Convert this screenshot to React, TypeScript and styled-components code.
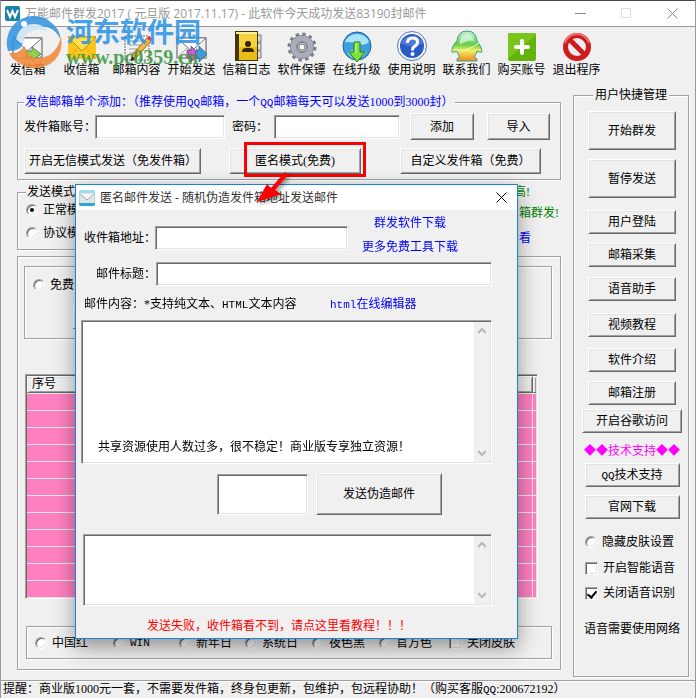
import React from "react";
import styled, { createGlobalStyle, css } from "styled-components";

const songFont = '"Liberation Serif", "Noto Sans CJK SC", serif';
const uiFont = '"Open Sans", "Noto Sans CJK SC", sans-serif';
const face = "#f0f0f0";

const GlobalStyle = createGlobalStyle`
  * { box-sizing: border-box; }
  body { margin: 0; background: ${face}; color: #000; font: 12px/16px ${songFont}; }
  button, input, textarea { font: inherit; color: inherit; margin: 0; }
`;

const sunken = css`
  border: 1px solid;
  border-color: #a0a0a0 #fff #fff #a0a0a0;
  box-shadow: inset 1px 1px 0 #696969, inset -1px -1px 0 #e3e3e3;
`;
const raised = css`
  border: 1px solid;
  border-color: #fff #696969 #696969 #fff;
  box-shadow: inset 1px 1px 0 #e3e3e3, inset -1px -1px 0 #a0a0a0;
`;
const etched = css`
  border: 1px solid #a0a0a0;
  box-shadow: 1px 1px 0 #fff, inset 1px 1px 0 #fff;
`;

const Window = styled.div`
  position: relative;
  display: flex;
  flex-direction: column;
  min-height: 100vh;
  border: 1px solid #999;
  border-top-color: #4a4549;
  overflow: hidden;
  white-space: nowrap;
`;
const TitleBar = styled.header`
  display: flex;
  align-items: center;
  height: 26px;
  padding-left: 4px;
  background: #fff;
  border-bottom: 1px solid #999;
  font-family: ${uiFont};
  color: #999;
`;
const Title = styled.h1`
  flex: 1;
  margin: 0 0 0 5px;
  font-size: 12px;
  font-weight: 400;
`;
const CaptionButton = styled.button<{ $w: number }>`
  display: flex;
  align-items: center;
  justify-content: center;
  width: ${(p) => p.$w}px;
  height: 25px;
  padding: 0;
  border: 0;
  background: none;
`;
const Toolbar = styled.nav`
  display: grid;
  grid-template-columns: 53px repeat(10, 55px);
  padding-top: 3px;
`;
const Tool = styled.button`
  display: flex;
  flex-direction: column;
  align-items: center;
  padding: 0;
  border: 0;
  background: none;
  svg { display: block; }
`;
const Watermark = styled.div`
  position: absolute;
  left: 3px;
  top: 11px;
  display: flex;
  pointer-events: none;
`;
const WatermarkText = styled.div`
  margin: 1px 0 0 2px;
`;
const WatermarkName = styled.div`
  font: 700 27px/36px "Noto Sans CJK SC", sans-serif;
  color: #2f96e6;
  opacity: 0.88;
`;
const WatermarkSite = styled.div`
  font: 700 20px/16px "Liberation Serif", serif;
  color: #38963f;
  opacity: 0.85;
`;

const Main = styled.main`
  flex: 1;
  display: grid;
  grid-template-columns: minmax(0, 1fr) 116px;
  gap: 12px;
  padding: 0 6px 0 16px;
`;
const LeftColumn = styled.div`
  display: flex;
  flex-direction: column;
  padding: 16px 0 10px;
`;
const Group = styled.fieldset<{ $pad: string; $width?: string }>`
  ${etched}
  margin: 0;
  min-width: 0;
  padding: ${(p) => p.$pad};
  width: ${(p) => p.$width ?? "auto"};
`;
const Legend = styled.legend<{ $blue?: boolean }>`
  padding: 0 2px 0 1px;
  background: ${face};
  color: ${(p) => (p.$blue ? "#00f" : "#000")};
`;
const Row = styled.div<{ $top?: number }>`
  display: flex;
  align-items: center;
  margin-top: ${(p) => p.$top ?? 0}px;
`;
const FieldLabel = styled.label<{ $w: number; $right?: boolean }>`
  flex: none;
  width: ${(p) => p.$w}px;
  text-align: ${(p) => (p.$right ? "right" : "left")};
`;
const TextBox = styled.input<{ $w: number; $h?: number }>`
  ${sunken}
  width: ${(p) => p.$w}px;
  height: ${(p) => p.$h ?? 24}px;
  padding: 0 3px;
  background: #fff;
  outline: 0;
`;
const Button = styled.button<{ $w: number; $h?: number; $left?: number; $top?: number }>`
  ${raised}
  flex: none;
  width: ${(p) => p.$w}px;
  height: ${(p) => p.$h ?? 24}px;
  margin-left: ${(p) => p.$left ?? 0}px;
  margin-top: ${(p) => p.$top ?? 0}px;
  padding: 0 4px;
  background: ${face};
`;
const Highlighted = styled.span`
  position: relative;
  display: flex;
  margin-left: 28px;
  &::after {
    content: "";
    position: absolute;
    inset: -6px -5px -3px 15px;
    border: 3px solid #fb0000;
  }
`;
const Half = styled.span`
  font: 11px/12px "Liberation Mono", monospace;
`;
const ModeArea = styled.div`
  display: flex;
  justify-content: space-between;
  margin-top: 4px;
`;
const Notes = styled.div`
  width: 47px;
  color: #008000;
`;
const Note = styled.div<{ $top?: number; $left?: number }>`
  margin-top: ${(p) => p.$top ?? 0}px;
  padding-left: ${(p) => p.$left ?? 0}px;
`;
const Link = styled.a<{ $red?: boolean; $left?: number; $top?: number }>`
  display: block;
  margin-left: ${(p) => p.$left ?? 0}px;
  margin-top: ${(p) => p.$top ?? 0}px;
  color: ${(p) => (p.$red ? "#f00" : "#00f")};
  text-decoration: none;
`;
const OptionLabel = styled.label<{ $top?: number; $w?: number }>`
  display: flex;
  align-items: center;
  gap: 5px;
  flex: none;
  width: ${(p) => (p.$w ? p.$w + "px" : "auto")};
  margin-top: ${(p) => p.$top ?? 0}px;
`;
const Radio = styled.input.attrs({ type: "radio" })`
  appearance: none;
  flex: none;
  display: grid;
  place-items: center;
  width: 12px;
  height: 12px;
  border-radius: 50%;
  border: 1px solid;
  border-color: #a0a0a0 #fff #fff #a0a0a0;
  box-shadow: inset 1px 1px 0 #696969, inset -1px -1px 0 #e3e3e3;
  background: #fff;
  &:checked::after {
    content: "";
    width: 4px;
    height: 4px;
    border-radius: 50%;
    background: #000;
  }
`;
const Check = styled.input.attrs({ type: "checkbox" })`
  ${sunken}
  appearance: none;
  flex: none;
  display: grid;
  place-items: center;
  width: 13px;
  height: 13px;
  background: #fff;
  &:checked::after {
    content: "";
    width: 4px;
    height: 7px;
    border: solid #000;
    border-width: 0 2px 2px 0;
    transform: rotate(40deg);
  }
`;
const Outer = styled.section`
  ${etched}
  flex: 1;
  margin-top: 6px;
  padding: 9px 8px 10px 6px;
`;
const FreeBox = styled.div`
  ${etched}
  height: 73px;
  padding: 10px 8px;
`;
const ListFrame = styled.div`
  ${sunken}
  margin: 35px 14px 27px 1px;
  padding: 1px;
`;
const List = styled.table`
  width: 100%;
  border-collapse: separate;
  border-spacing: 0;
  table-layout: fixed;
  th {
    ${raised}
    height: 17px;
    padding: 0 0 0 4px;
    line-height: 13px;
    text-align: left;
    font-weight: 400;
  }
  td {
    height: 17px;
    padding: 0;
    background: #ff80c0;
    border-top: 1px solid #e8e8e8;
    border-right: 1px solid #e8e8e8;
  }
  td:last-child, th:last-child { border-right: 0; padding: 0; }
`;
const SkinBox = styled.div`
  ${etched}
  display: flex;
  align-items: center;
  height: 33px;
  margin-left: 2px;
  padding-left: 8px;
`;
const SideGroup = styled.fieldset`
  ${etched}
  display: block;
  min-width: 0;
  margin: 9px 0 3px;
  padding: 0 0 0 2px;
`;
const SideLegend = styled.legend`
  margin-left: 17px;
  padding: 0 2px;
  background: ${face};
`;
const SideList = styled.div`
  display: flex;
  flex-direction: column;
  align-items: center;
  padding-top: 8px;
`;
const SideOptions = styled.div`
  width: 94px;
  margin-top: 15px;
`;
const Support = styled.div`
  margin: 9px 0 5px;
  font-family: "Noto Sans CJK SC", sans-serif;
  color: #f0f;
`;
const StatusBar = styled.footer`
  height: 18px;
  padding-left: 2px;
  border-top: 1px solid #a0a0a0;
  box-shadow: inset 0 1px 0 #fff;
  line-height: 17px;
`;

const Dialog = styled.section`
  position: absolute;
  left: 74px;
  top: 183px;
  width: 443px;
  background: ${face};
  border: 1px solid #1883d7;
  box-shadow: 0 8px 20px rgba(0, 0, 0, 0.4);
`;
const DialogTitle = styled.header`
  display: flex;
  align-items: center;
  height: 25px;
  padding-left: 3px;
  background: #fff;
  font-family: ${uiFont};
  color: #333;
`;
const DialogBody = styled.form`
  padding: 5px 25px 4px 5px;
`;
const AddressField = styled.div`
  display: flex;
  align-items: center;
  margin: 6px 0 0 3px;
`;
const Downloads = styled.div`
  width: 96px;
  margin-left: 14px;
  text-align: center;
`;
const MemoFrame = styled.div<{ $h: number; $top: number; $left?: number }>`
  ${sunken}
  display: flex;
  height: ${(p) => p.$h}px;
  margin: ${(p) => p.$top}px 0 0 ${(p) => p.$left ?? 0}px;
  padding: 1px;
  background: #fff;
`;
const MemoPane = styled.div`
  flex: 1;
  display: flex;
  flex-direction: column;
`;
const Memo = styled.textarea`
  flex: 1;
  width: 100%;
  border: 0;
  padding: 2px;
  resize: none;
  outline: 0;
  overflow: hidden;
  background: transparent;
`;
const MemoNote = styled.p`
  margin: 0 0 7px 15px;
`;
const ScrollTrack = styled.div`
  display: flex;
  flex-direction: column;
  justify-content: space-between;
  align-items: center;
  width: 16px;
  padding: 5px 0;
  background: ${face};
  svg { display: block; }
`;
const Arrow = styled.svg`
  position: absolute;
  left: 249px;
  top: 169px;
  filter: drop-shadow(2px 2px 2px rgba(0, 0, 0, 0.45));
  pointer-events: none;
`;

const Envelope = ({ children }: { children?: React.ReactNode }) => (
  <svg width="32" height="32" viewBox="0 0 32 32">
    <rect x="1" y="8" width="29" height="20" fill="#f1f1f1" stroke="#555" />
    <path d="M1 28 12 17M30 28 19 17" stroke="#aaa" fill="none" />
    <path d="M1 8 15.500 21 30 8Z" fill="#fff" stroke="#777" />
    {children}
  </svg>
);
const Chevron = ({ d, fill }: { d: string; fill: string }) => <path d={d} fill={fill} stroke="#345" strokeWidth=".6" />;

const icons: Record<string, React.ReactNode> = {
  发信箱: (
    <Envelope>
      <Chevron d="M14 21h6v-4l9 7-9 7v-4h-6Z" fill="#8bd34a" />
    </Envelope>
  ),
  收信箱: (
    <svg width="32" height="32" viewBox="0 0 32 32">
      <rect x="2" y="6" width="28" height="23" rx="1" fill="#fbc61c" />
      <path d="M2 7h28L17 20q-1 1-2 0Z" fill="#ffdf4d" stroke="#a98212" strokeWidth=".8" />
      <path d="M2 29 12 18M30 29 20 18" stroke="#e3a70d" fill="none" />
    </svg>
  ),
  邮箱内容: (
    <svg width="32" height="32" viewBox="0 0 32 32">
      <path d="M4 6h24v24H4Z" fill="#f3f3f3" stroke="#666" strokeDasharray="2 1" />
      <path d="M8 11h16M8 15h13M8 19h10M8 23h7" stroke="#999" />
      <path d="M26 8l4 3-15 17-5 3 1-6Z" fill="#f6b53c" stroke="#7d5010" strokeWidth=".8" />
      <path d="m26 8 2-2 4 3-2 2Z" fill="#d8323f" />
      <path d="m11 26-1 5 4-2Z" fill="#222" />
    </svg>
  ),
  开始发送: (
    <Envelope>
      <Chevron d="M11 20h4v-4l8 8-8 8v-4h-4Z" fill="#c75fc9" />
      <Chevron d="M20 20h3v-4l8 8-8 8v-4h-3Z" fill="#3f9bdc" />
    </Envelope>
  ),
  信箱日志: (
    <svg width="32" height="32" viewBox="0 0 32 32">
      <path d="M26 5h4v7h-4M26 13h4v7h-4M26 21h4v7h-4" fill="#ddd" stroke="#777" />
      <path d="M4 1h23v30H4Z" fill="#473500" />
      <path d="M8 4h18v26H8Z" fill="#e9bd18" />
      <path d="M5 2h21v2H5Z" fill="#fff0a0" />
      <path d="M8 4h18v13H8Z" fill="#f4d242" />
      <circle cx="17" cy="14" r="3" fill="#33260a" />
      <path d="M11 22q0-4 4-4h4q4 0 4 4Z" fill="#33260a" />
    </svg>
  ),
  软件保镖: (
    <svg width="32" height="32" viewBox="0 0 32 32">
      <circle cx="16" cy="17" r="12.500" fill="none" stroke="#7b7f8a" strokeWidth="4" strokeDasharray="3.270 3.270" />
      <circle cx="16" cy="17" r="8.500" fill="none" stroke="#6d707a" strokeWidth="7" />
      <circle cx="16" cy="17" r="8.500" fill="none" stroke="#a9adba" strokeWidth="6" />
      <circle cx="16" cy="17" r="5" fill="#c9cbd3" stroke="#666" />
      <circle cx="16" cy="17" r="3" fill="#fff" stroke="#777" />
    </svg>
  ),
  在线升级: (
    <svg width="32" height="32" viewBox="0 0 32 32">
      <circle cx="16" cy="16" r="14" fill="#3d9fdc" stroke="#1d5e9c" />
      <path d="M4 12a13 13 0 0 1 24 0q-4 4-9 2T4 12Z" fill="#a6e3fa" />
      <path d="M6 23q6-6 9-1t11-1q-4 8-12 8-5-1-8-6Z" fill="#67cbed" />
      <path d="M13 12h6v10h5l-8 10-8-10h5Z" fill="#7ee03c" stroke="#2f7f12" />
      <path d="M15 13v10" stroke="#d5ffa8" />
    </svg>
  ),
  使用说明: (
    <svg width="32" height="32" viewBox="0 0 32 32">
      <circle cx="16" cy="16" r="14.500" fill="#f4f6fb" stroke="#5b76b8" />
      <circle cx="16" cy="16" r="12" fill="#285ac4" />
      <path d="M5 13a12 12 0 0 1 22 0q-11 7-22 0Z" fill="#4c7cd8" />
      <path d="M11.500 13q0-5 5-5t5 4q0 2.500-3 4.500-2 1-2 4" fill="none" stroke="#fff" strokeWidth="3" />
      <circle cx="16.500" cy="24" r="2" fill="#fff" />
    </svg>
  ),
  联系我们: (
    <svg width="32" height="32" viewBox="0 0 32 32">
      <defs>
        <linearGradient id="penguin" x2="0" y2="1">
          <stop offset="0" stopColor="#c4eed8" />
          <stop offset=".45" stopColor="#62d049" />
          <stop offset=".65" stopColor="#f3ee63" />
          <stop offset="1" stopColor="#f58a1b" />
        </linearGradient>
      </defs>
      <path d="M16 1q9 0 10 10 5 6 5 11-1 1-5-1-1 4-3 6 4 1 3 4H6q-1-3 3-4-2-2-3-6-4 2-5 1-1-5 5-11Q7 1 16 1Z" fill="url(#penguin)" stroke="#3b9e88" />
      <path d="M9 11Q10 4 16 4t7 7q-7-2-14 4Z" fill="#e3f8ea" opacity=".7" />
      <path d="M4 20q13 2 24-7" stroke="#e8ffc4" fill="none" />
    </svg>
  ),
  购买账号: (
    <svg width="32" height="32" viewBox="0 0 32 32">
      <rect x="2" y="3" width="28" height="28" rx="2" fill="#62b30b" />
      <path d="M2 5q0-2 2-2h24q2 0 2 2L2 29Z" fill="#7ac51c" />
      <path d="M16 11v12M10 17h12" stroke="#fff" strokeWidth="4" strokeLinecap="round" />
    </svg>
  ),
  退出程序: (
    <svg width="32" height="32" viewBox="0 0 32 32">
      <circle cx="16" cy="17" r="15" fill="#f8e9e9" />
      <circle cx="16" cy="17" r="11.500" fill="#eee" stroke="#ce1c1e" strokeWidth="5" />
      <path d="m8 9 16 16" stroke="#ce1c1e" strokeWidth="5" />
      <path d="M4 13a12.500 12.500 0 0 1 24 0" stroke="#f07070" strokeWidth="2" fill="none" />
    </svg>
  ),
};

const sideButtons = [
  { label: "开始群发", w: 88, h: 39, top: 0 },
  { label: "暂停发送", w: 88, h: 39, top: 9 },
  { label: "用户登陆", w: 88, h: 24, top: 12 },
  { label: "邮箱采集", w: 88, h: 24, top: 9 },
  { label: "语音助手", w: 88, h: 24, top: 10 },
  { label: "视频教程", w: 88, h: 24, top: 12 },
  { label: "软件介绍", w: 88, h: 24, top: 11 },
  { label: "邮箱注册", w: 88, h: 24, top: 9 },
  { label: "开启谷歌访问", w: 100, h: 24, top: 4 },
];
const skins: [React.ReactNode, number][] = [
  ["中国红", 78],
  [<Half key="win">WIN</Half>, 66],
  ["新年日", 66],
  ["系统日", 67],
  ["夜色黑", 67],
  ["官方色", 70],
];

const Scrollbar = () => (
  <ScrollTrack>
    <svg width="8" height="8" viewBox="0 0 8 8"><path d="M0 6 4 2l4 4" fill="none" stroke="#b8b8b8" strokeWidth="2" /></svg>
    <svg width="8" height="8" viewBox="0 0 8 8"><path d="m0 2 4 4 4-4" fill="none" stroke="#b8b8b8" strokeWidth="2" /></svg>
  </ScrollTrack>
);

const AnonymousMailDialog = () => (
  <Dialog role="dialog" aria-labelledby="dialog-title">
    <DialogTitle>
      <svg width="16" height="16" viewBox="0 0 16 16">
        <rect width="16" height="16" rx="2" fill="#9edcf0" />
        <path d="M0 13h16v1q0 2-2 2H2q-2 0-2-2Z" fill="#28a9d8" />
        <rect x="1" y="3" width="14" height="10" fill="#e4e4e4" />
        <path d="m1 4 7 6 7-6" fill="#f7f7f7" stroke="#a4a4a4" />
      </svg>
      <Title id="dialog-title" as="h2">匿名邮件发送 - 随机伪造发件箱地址发送邮件</Title>
      <CaptionButton $w={31} aria-label="关闭对话框">
        <svg width="11" height="11" viewBox="0 0 11 11"><path d="m.5.5 10 10m0-10-10 10" stroke="#000" /></svg>
      </CaptionButton>
    </DialogTitle>
    <DialogBody onSubmit={(e) => e.preventDefault()}>
      <Row>
        <AddressField>
          <FieldLabel $w={71} htmlFor="to">收件箱地址：</FieldLabel>
          <TextBox id="to" $w={193} autoFocus />
        </AddressField>
        <Downloads>
          <Link href="#mass">群发软件下载</Link>
          <Link href="#tools" $top={8}>更多免费工具下载</Link>
        </Downloads>
      </Row>
      <Row $top={7}>
        <FieldLabel $w={75} $right htmlFor="subject">邮件标题：</FieldLabel>
        <TextBox id="subject" $w={336} />
      </Row>
      <Row $top={10}>
        <FieldLabel $w={249} htmlFor="content">
          &nbsp;邮件内容：*支持纯文本、<Half>HTML</Half>文本内容
        </FieldLabel>
        <Link href="#editor"><Half>html</Half>在线编辑器</Link>
      </Row>
      <MemoFrame $h={144} $top={8}>
        <MemoPane>
          <Memo id="content" />
          <MemoNote>共享资源使用人数过多，很不稳定！商业版专享独立资源！</MemoNote>
        </MemoPane>
        <Scrollbar />
      </MemoFrame>
      <Row $top={9}>
        <FieldLabel $w={136} htmlFor="code" aria-label="验证码" />
        <TextBox id="code" $w={91} $h={41} />
        <Button $w={126} $h={42} $left={8}>发送伪造邮件</Button>
      </Row>
      <MemoFrame $h={72} $top={19} $left={2}>
        <Memo aria-label="发送结果" />
        <Scrollbar />
      </MemoFrame>
      <Link $red $left={66} $top={12} href="#help">发送失败，收件箱看不到，请点这里看教程！！！</Link>
    </DialogBody>
  </Dialog>
);

export default function App() {
  return (
    <>
      <GlobalStyle />
      <Window>
        <TitleBar>
          <svg width="15" height="15" viewBox="0 0 15 15">
            <rect width="15" height="15" rx="2" fill="#1a82a8" />
            <path d="m2 4 3 7 2.500-6L10 11l3-7" fill="none" stroke="#fff" strokeWidth="2" />
          </svg>
          <Title>万能邮件群发2017 ( 元旦版 2017.11.17) - 此软件今天成功发送83190封邮件</Title>
          <CaptionButton $w={46} aria-label="最小化">
            <svg width="11" height="11" viewBox="0 0 11 11"><path d="M0 5.500h11" stroke="#888" /></svg>
          </CaptionButton>
          <CaptionButton $w={46} aria-label="最大化">
            <svg width="11" height="11" viewBox="0 0 11 11"><path d="M.5.5h9v9h-9Z" fill="none" stroke="#ddd" /></svg>
          </CaptionButton>
          <CaptionButton $w={46} aria-label="关闭">
            <svg width="11" height="11" viewBox="0 0 11 11"><path d="m.5.5 10 10m0-10-10 10" stroke="#888" /></svg>
          </CaptionButton>
        </TitleBar>

        <Toolbar>
          {Object.entries(icons).map(([label, icon]) => (
            <Tool key={label}>
              {icon}
              {label}
            </Tool>
          ))}
        </Toolbar>

        <Main>
          <LeftColumn>
            <Group $pad="3px 6px 5px">
              <Legend $blue>
                发信邮箱单个添加：（推荐使用<Half>QQ</Half>邮箱，一个<Half>QQ</Half>邮箱每天可以发送1000到3000封）
              </Legend>
              <Row>
                <FieldLabel $w={71} htmlFor="account">发件箱账号：</FieldLabel>
                <TextBox id="account" $w={130} />
                <FieldLabel $w={49} $right htmlFor="password">密码：&nbsp;&nbsp;</FieldLabel>
                <TextBox id="password" type="password" $w={126} />
                <Button $w={64} $h={27} $left={10}>添加</Button>
                <Button $w={63} $h={27} $left={13}>导入</Button>
              </Row>
              <Row $top={8}>
                <Button $w={177} $h={26}>开启无信模式发送（免发件箱）</Button>
                <Highlighted>
                  <Button $w={132} $h={26}>匿名模式(免费)</Button>
                </Highlighted>
                <Button $w={141} $h={26} $left={39}>自定义发件箱（免费）</Button>
              </Row>
            </Group>

            <ModeArea>
              <Group $pad="2px 6px 8px 8px" $width="60%">
                <Legend>发送模式</Legend>
                <OptionLabel><Radio name="mode" defaultChecked />正常模</OptionLabel>
                <OptionLabel $top={7}><Radio name="mode" />协议模</OptionLabel>
              </Group>
              <Notes>
                <Note>高!</Note>
                <Note $top={5} $left={5}>箱群发!</Note>
                <Note $top={9} $left={5}><Link href="#view">看</Link></Note>
              </Notes>
            </ModeArea>

            <Outer>
              <FreeBox>
                <OptionLabel><Radio name="source" />免费</OptionLabel>
                <Button $w={90} $left={40} $top={12} aria-label="设置" />
              </FreeBox>
              <ListFrame>
                <List>
                  <colgroup>
                    <col />
                    <col width="3" />
                  </colgroup>
                  <thead>
                    <tr><th>序号</th><th /></tr>
                  </thead>
                  <tbody>
                    {Array.from({ length: 12 }, (_, i) => (
                      <tr key={i}><td /><td /></tr>
                    ))}
                  </tbody>
                </List>
              </ListFrame>
              <SkinBox>
                {skins.map(([name, w], i) => (
                  <OptionLabel key={i} $w={w}><Radio name="skin" />{name}</OptionLabel>
                ))}
                <OptionLabel><Check />关闭皮肤</OptionLabel>
              </SkinBox>
            </Outer>
          </LeftColumn>

          <SideGroup>
            <SideLegend>用户快捷管理</SideLegend>
            <SideList>
              {sideButtons.map((b) => (
                <Button key={b.label} $w={b.w} $h={b.h} $top={b.top}>{b.label}</Button>
              ))}
              <Support>◆◆技术支持◆◆</Support>
              <Button $w={95}><Half>QQ</Half>技术支持</Button>
              <Button $w={95} $top={8}>官网下载</Button>
              <SideOptions>
                <OptionLabel><Radio name="hide" />隐藏皮肤设置</OptionLabel>
                <OptionLabel $top={10}><Check />开启智能语音</OptionLabel>
                <OptionLabel $top={9}><Check defaultChecked />关闭语音识别</OptionLabel>
              </SideOptions>
              <Note $top={20}>语音需要使用网络</Note>
            </SideList>
          </SideGroup>
        </Main>

        <StatusBar>
          提醒：商业版1000元一套，不需要发件箱，终身包更新，包维护，包远程协助！（购买客服<Half>QQ</Half>:200672192）
        </StatusBar>

        <Watermark>
          <svg width="60" height="58" viewBox="0 -2 60 58">
            <g opacity=".88">
              <path d="M4 37A27 27 0 0 1 44 6q12 8 13 20-7-15-23-14-14 1-15 16-1 9-15 9Z" fill="#3495df" />
              <path d="M57 23q3 18-11 27-16 9-31-1Q8 45 5 39q12 1 16-7 2 12 14 12 17-1 22-21Z" fill="#f28a3c" />
              <path d="M12 25q4-15 18-15 10 0 14 8-12-5-19 0-4 3-7 12Z" fill="#cfe6f7" />
              <circle cx="20" cy="10" r="3" fill="#fff" />
            </g>
          </svg>
          <WatermarkText>
            <WatermarkName>河东软件园</WatermarkName>
            <WatermarkSite>www.pc0359.cn</WatermarkSite>
          </WatermarkText>
        </Watermark>

        <AnonymousMailDialog />

        <Arrow width="42" height="40" viewBox="250 170 42 40">
          <path d="m257 202 10-18 4 4 14-16 3 3-13 15 6 4Z" fill="#fb0000" />
        </Arrow>
      </Window>
    </>
  );
}
